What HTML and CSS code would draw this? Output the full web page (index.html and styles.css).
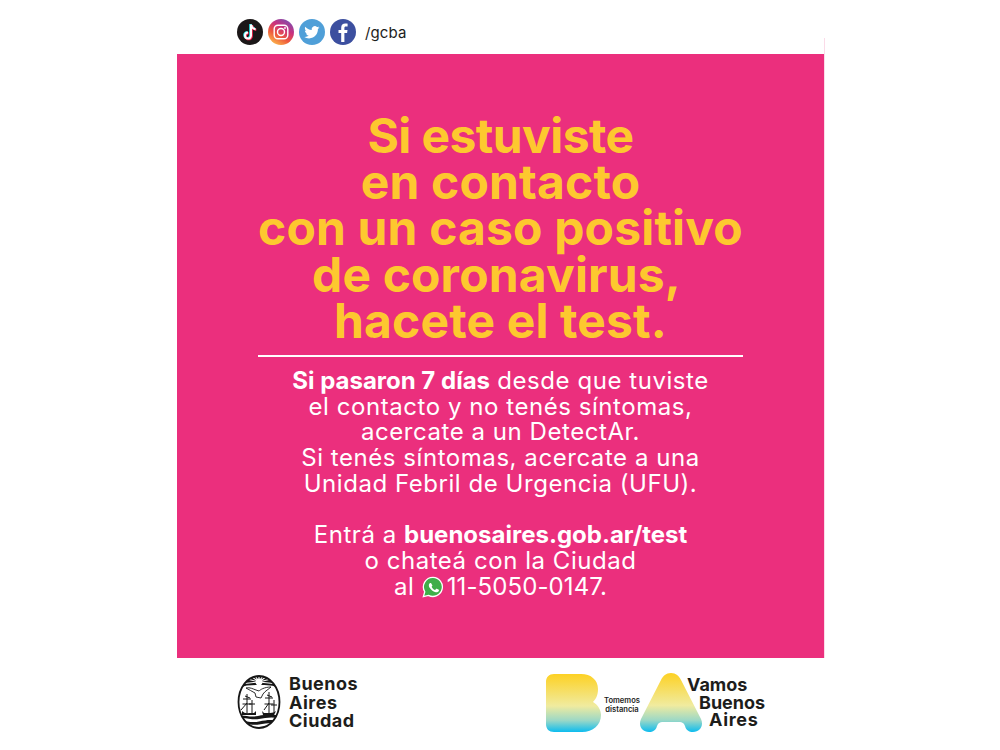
FILE: index.html
```html
<!DOCTYPE html>
<html lang="es">
<head>
<meta charset="utf-8">
<title>Si estuviste en contacto con un caso positivo</title>
<link rel="stylesheet" href="styles.css">
</head>
<body>
<main class="poster">
  <header class="social">
    <svg class="icon" viewBox="0 0 26 26" aria-label="TikTok"><circle cx="13" cy="13" r="13" fill="#1b1718"/><path d="M14 5.500v11.100a3 3 0 1 1-3-3M14.400 6c.3 2.400 1.800 3.900 4.200 4.200" fill="none" stroke="#25e0e6" stroke-width="2.300" transform="translate(-.7 -.5)"/><path d="M14 5.500v11.100a3 3 0 1 1-3-3M14.400 6c.3 2.400 1.800 3.900 4.200 4.200" fill="none" stroke="#f5254f" stroke-width="2.300" transform="translate(.7 .6)"/><path d="M14 5.500v11.100a3 3 0 1 1-3-3M14.400 6c.3 2.400 1.800 3.900 4.200 4.200" fill="none" stroke="#fff" stroke-width="2"/></svg>
    <svg class="icon" viewBox="0 0 26 26" aria-label="Instagram"><defs><linearGradient id="ig" x1="0.2" y1="1" x2="0.8" y2="0"><stop offset="0" stop-color="#fdc04e"/><stop offset=".35" stop-color="#ee5a3c"/><stop offset=".65" stop-color="#c9317f"/><stop offset="1" stop-color="#7650b4"/></linearGradient></defs><circle cx="13" cy="13" r="13" fill="url(#ig)"/><rect x="6.200" y="6.200" width="13.600" height="13.600" rx="3.800" fill="none" stroke="#fff" stroke-width="1.400"/><circle cx="13" cy="13" r="3.500" fill="none" stroke="#fff" stroke-width="1.400"/><circle cx="17" cy="9" r=".9" fill="#fff"/></svg>
    <svg class="icon" viewBox="0 0 26 26" aria-label="Twitter"><circle cx="13" cy="13" r="13" fill="#4f9fd8"/><path d="M20.500 8.600c-.6.3-1.200.4-1.800.5.600-.4 1.100-1 1.300-1.700-.6.300-1.300.6-2 .7a3.100 3.100 0 0 0-5.300 2.800c-2.600-.1-4.900-1.400-6.400-3.200-.8 1.400-.4 3.200 1 4.100-.5 0-1-.2-1.400-.4 0 1.500 1 2.800 2.500 3.100-.5.100-.9.100-1.400 0 .4 1.200 1.500 2.100 2.900 2.100A6.300 6.300 0 0 1 5.300 18c1.400.9 3 1.400 4.800 1.400 5.800 0 9-4.900 8.800-9.300.6-.4 1.200-.9 1.600-1.500z" fill="#fff"/></svg>
    <svg class="icon" viewBox="0 0 26 26" aria-label="Facebook"><circle cx="13" cy="13" r="13" fill="#3c4f9f"/><path d="M14.400 23v-9h2.700l.4-3.100h-3.100V9c0-.9.300-1.500 1.500-1.500h1.700V4.700c-.3 0-1.300-.1-2.400-.1-2.400 0-4 1.500-4 4.100v2.200H8.500V14h2.700v9z" fill="#fff"/></svg>
    <span class="handle">/gcba</span>
  </header>

  <section class="panel">
    <h1 class="headline">
      <span class="hl hl-tight">Si estuviste</span>
      <span class="hl">en contacto</span>
      <span class="hl">con un caso positivo</span>
      <span class="hl hl-comma">de coronavirus,</span>
      <span class="hl">hacete el test.</span>
    </h1>
    <hr class="rule">
    <div class="copy">
      <p class="para">
        <span class="ln"><b>Si pasaron 7 días</b> desde que tuviste</span>
        <span class="ln">el contacto y no tenés síntomas,</span>
        <span class="ln">acercate a un DetectAr.</span>
        <span class="ln">Si tenés síntomas, acercate a una</span>
        <span class="ln">Unidad Febril de Urgencia (UFU).</span>
      </p>
      <p class="para">
        <span class="ln">Entrá a <b>buenosaires.gob.ar/test</b></span>
        <span class="ln">o chateá con la Ciudad</span>
        <span class="ln">al <svg class="wa" viewBox="0 0 24 24" aria-label="WhatsApp"><path d="M12 1.500A10.400 10.400 0 0 0 3 17.200L1.500 22.500l5.500-1.400A10.400 10.400 0 1 0 12 1.500z" fill="#3fae49" stroke="#fff" stroke-width="1.400"/><path d="M8.800 6.700c-.3 0-.7.100-1 .5-.4.400-1.200 1.200-1.200 2.900s1.200 3.300 1.400 3.500c.2.200 2.400 3.700 5.800 5 2.900 1.100 3.500.9 4.100.8.600-.1 2-.8 2.200-1.600.3-.8.300-1.400.2-1.600-.1-.2-.3-.2-.6-.4l-2.300-1.100c-.3-.1-.6-.2-.8.100l-1.100 1.300c-.2.200-.4.300-.7.100-1-.4-1.900-.9-2.700-1.700-.7-.7-1.300-1.500-1.600-2.200-.2-.3 0-.5.100-.6l.8-1c.1-.2.100-.4 0-.6L10 7.500c-.3-.7-.6-.7-.8-.8z" fill="#fff" transform="translate(2.200 2.200) scale(.8)"/></svg><span class="phone">11-5050-0147.</span></span>
      </p>
    </div>
  </section>

  <footer class="logos">
    <div class="gcba">
      <svg class="shield" viewBox="0 0 44 56" aria-label="Escudo de la Ciudad">
        <defs><clipPath id="oval"><ellipse cx="22" cy="28" rx="20.500" ry="26"/></clipPath></defs>
        <ellipse cx="22" cy="28" rx="20.500" ry="26" fill="#fff"/>
        <g clip-path="url(#oval)">
          <path d="M0 0H44V15C37 11 30 11 22 11 14 11 7 11 0 15z" fill="#161616"/>
          <path d="M22 8 6 4M22 8 11 0M22 8 17 0M22 8 22 0M22 8 27 0M22 8 33 0M22 8 38 4M22 8 3 10M22 8 41 10" stroke="#fff" stroke-width="1.100"/>
          <circle cx="22" cy="8" r="3.400" fill="#fff"/>
          <path d="M9 14c4-1 7 1 10 2l3 1c1-1 5-4 12-4-2 2-6 4-8 7l-2 4-5-1-1-4c-3-2-6-3-9-5z" fill="#fff" stroke="#161616" stroke-width=".9"/>
          <path d="M10 20v20M6 25h8M5.500 30h9M15 26v13M12 30h6M32 18v22M28 24h8M27.500 30h9M37 26v13M34 31h6M8 22l5 2M30 21l5 2M4 36l6-7M27 36l5-7" stroke="#161616" stroke-width="1" fill="none"/>
          <path d="M5 37q3 3 7 2h5l2-2v4H5zM25 37l2 2h6q4 0 6-2l-2 4H26z" fill="#161616"/>
          <path d="M0 42C7 40 12 44 21 42S34 40 44 42V44.500C35 42.500 29 43.500 22 45S8 42.500 0 44.500zM0 47.500C7 45.500 13 49.500 22 47.500S36 45.500 44 47.500V50C36 48 29 49 22 50.500S8 48 0 50zM8 52.500C12 51.500 17 53.500 22 53S32 51.500 36 52.500V56H8z" fill="#161616"/>
        </g>
        <ellipse cx="22" cy="28" rx="20.500" ry="26" fill="none" stroke="#161616" stroke-width="1.800"/>
      </svg>
      <div class="gcba-name"><span>Buenos</span><span>Aires</span><span>Ciudad</span></div>
    </div>
    <div class="vamos">
      <svg class="letter-b" viewBox="0 0 56 58" aria-label="B"><defs><linearGradient id="ba" x1="0" y1="0" x2="0" y2="1"><stop offset="0" stop-color="#fdd123"/><stop offset=".55" stop-color="#f0eb9f"/><stop offset=".8" stop-color="#9cd8c6"/><stop offset="1" stop-color="#0dbcef"/></linearGradient></defs><path d="M8 0h27c10 0 17 6 17 15 0 6-2 10-5 13 5 3 8 8 8 13 0 10-8 17-19 17H8c-5 0-8-3-8-8V8c0-5 3-8 8-8z" fill="url(#ba)"/></svg>
      <div class="tomemos"><span>Tomemos</span><span>distancia</span></div>
      <svg class="letter-a" viewBox="0 0 64 60" aria-label="A"><defs><linearGradient id="bb" x1="0" y1="0" x2="0" y2="1"><stop offset="0" stop-color="#fdd123"/><stop offset=".55" stop-color="#f0eb9f"/><stop offset=".8" stop-color="#9cd8c6"/><stop offset="1" stop-color="#0dbcef"/></linearGradient></defs><path d="M32 0c5 0 8 3 10 7l20 39c3 7-1 13-8 13-4 0-7-2-8-6l-1-2c-1-1-2-2-4-2H23c-2 0-3 1-4 2l-1 2c-1 4-4 6-8 6-7 0-11-6-8-13L22 7c2-4 5-7 10-7z" fill="url(#bb)"/></svg>
      <div class="vamos-name"><span class="v1">Vamos</span><span class="v2">Buenos</span><span class="v3">Aires</span></div>
    </div>
  </footer>
</main>
</body>
</html>
```
FILE: styles.css
```css
* { box-sizing: border-box; }
html, body { margin: 0; padding: 0; background: #fff; }
body { width: 1000px; height: 750px; overflow: hidden; font-family: Inter, "Liberation Sans", sans-serif; }
.poster { width: 647px; height: 750px; margin-left: 177px; display: flex; flex-direction: column; position: relative; }
.poster::after { content: ""; position: absolute; left: 647px; top: 38px; width: 1px; height: 620px; background: #fbdbe8; }

.social { height: 54px; padding: 10px 0 0 60px; display: flex; align-items: center; gap: 5px; }
.icon { width: 26px; height: 26px; flex: none; }
.handle { margin-left: 4px; font-size: 15px; letter-spacing: .1px; color: #1d1d1b; }

.panel { height: 604px; background: #eb2f7d; padding-top: 59px; display: flex; flex-direction: column; align-items: center; color: #fff; }
.headline { margin: 0; color: #fdc82f; font-size: 48px; font-weight: 700; line-height: 46.200px; letter-spacing: .15px; text-align: center; }
.hl, .ln { display: block; white-space: nowrap; }
.hl-tight { letter-spacing: -.6px; }
.hl-comma { padding-right: 8px; }
.rule { width: 485px; height: 2px; margin: 11px 0 0; border: 0; background: #fff; }
.copy { margin-top: 11px; text-align: center; font-size: 24px; line-height: 25.700px; letter-spacing: .55px; }
.para { margin: 0 0 25.700px; }
.para b { font-weight: 700; letter-spacing: 0; }
.wa { width: 22px; height: 22px; vertical-align: -3px; }
.phone { margin-left: 3px; letter-spacing: .1px; }

.logos { flex: 1; display: flex; justify-content: space-between; padding: 16px 60px 0 60px; }
.gcba { display: flex; align-items: flex-start; gap: 8px; height: 60px; }
.shield { width: 44px; height: 56px; flex: none; }
.gcba-name { display: flex; flex-direction: column; padding-top: 1px; font-size: 18px; font-weight: 700; line-height: 18.500px; letter-spacing: .5px; color: #1d1d1b; }
.vamos { display: flex; align-items: flex-start; width: 218px; }
.letter-b { width: 56px; height: 58px; flex: none; }
.tomemos { display: flex; flex-direction: column; flex: none; margin: 23px 0 0 1px; width: 38px; font-size: 7.600px; font-weight: 600; line-height: 8.500px; text-align: center; color: #1d1d1b; }
.letter-a { width: 64px; height: 60px; flex: none; margin: -1px 0 0 -2px; }
.vamos-name { display: flex; flex-direction: column; flex: none; margin: 2px 0 0 -16px; font-size: 18px; font-weight: 700; line-height: 17.500px; color: #1d1d1b; width: 77px; }
.v2 { margin-left: 12px; }
.v3 { margin-left: 22px; letter-spacing: .7px; }
```
